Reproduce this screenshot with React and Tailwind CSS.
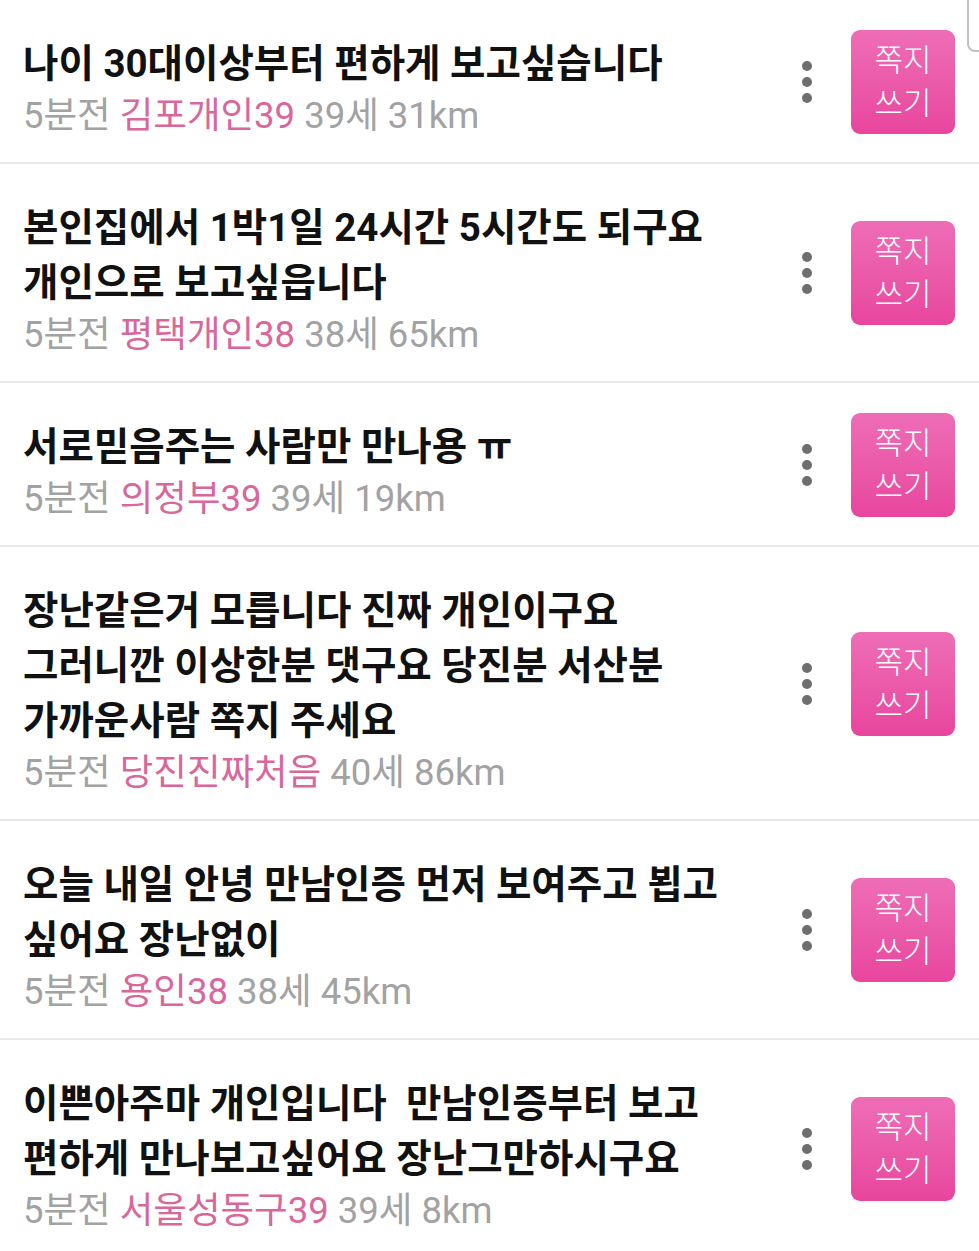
import React from 'react';

const posts = [
  { lines: ['나이 30대이상부터 편하게 보고싶습니다'], nick: '김포개인39', age: '39세', dist: '31km' },
  { lines: ['본인집에서 1박1일 24시간 5시간도 되구요', '개인으로 보고싶읍니다'], nick: '평택개인38', age: '38세', dist: '65km' },
  { lines: ['서로믿음주는 사람만 만나용 ㅠ'], nick: '의정부39', age: '39세', dist: '19km' },
  {
    lines: ['장난같은거 모릅니다 진짜 개인이구요', '그러니깐 이상한분 댓구요 당진분 서산분', '가까운사람 쪽지 주세요'],
    nick: '당진진짜처음', age: '40세', dist: '86km'
  },
  { lines: ['오늘 내일 안녕 만남인증 먼저 보여주고 뵙고', '싶어요 장난없이'], nick: '용인38', age: '38세', dist: '45km' },
  { lines: ['이쁜아주마 개인입니다  만남인증부터 보고', '편하게 만나보고싶어요 장난그만하시구요'], nick: '서울성동구39', age: '39세', dist: '8km' }
];

const font = { fontFamily: "Roboto, 'Noto Sans CJK KR', sans-serif" };

const PostRow = ({ post }) => (
  <div className="flex items-center pt-[36px] pb-[21px] pl-[23px] pr-[24px]">
    <div className="flex-1 min-w-0">
      {post.lines.map((line, i) => (
        <div key={i} className="text-[38.5px] leading-[55px] font-bold text-[#111111] whitespace-pre">
          {line}
        </div>
      ))}
      <div className="text-[36.5px] leading-[50px] text-[#a2a2a2] whitespace-pre">
        5분전 <span className="text-[#d8679b]">{post.nick}</span> {post.age} {post.dist}
      </div>
    </div>

    <div className="flex items-center gap-[39px] -mt-[14px]">
      {/* more menu dots */}
      <div className="flex flex-col gap-[6px]">
        <span className="block w-[10px] h-[10px] rounded-full bg-[#6e6e6e]"></span>
        <span className="block w-[10px] h-[10px] rounded-full bg-[#6e6e6e]"></span>
        <span className="block w-[10px] h-[10px] rounded-full bg-[#6e6e6e]"></span>
      </div>
      <button className="w-[104px] h-[104px] rounded-[9px] bg-gradient-to-b from-[#ee6db6] to-[#e8459d] flex flex-col items-center justify-center text-white text-[31px] leading-[43px] font-light">
        <span>쪽지</span>
        <span>쓰기</span>
      </button>
    </div>
  </div>
);

export default function App() {
  return (
    <div className="relative w-[979px] h-[1251px] overflow-hidden bg-white" style={font}>
      {posts.map((post, i) => (
        <div key={i} className={i > 0 ? 'border-t-2 border-[#e8e8e8]' : ''}>
          <PostRow post={post} />
        </div>
      ))}
      {/* scroll handle at top right */}
      <div className="absolute -top-[10px] -right-[12px] w-[24px] h-[62px] border-2 border-[#c2c2c2] rounded-[8px] bg-white"></div>
    </div>
  );
}
